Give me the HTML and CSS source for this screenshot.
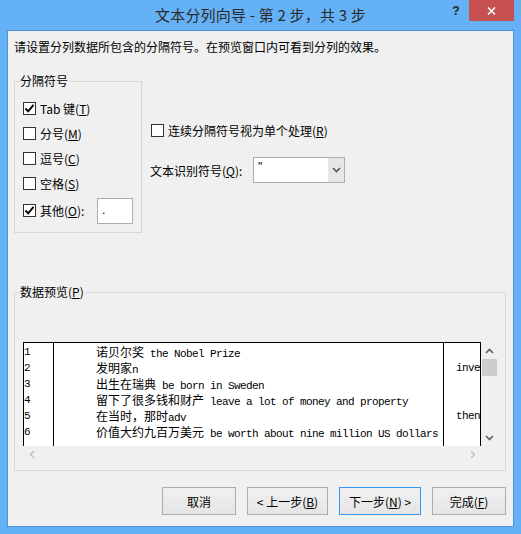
FILE: index.html
```html
<!DOCTYPE html>
<html lang="zh-CN">
<head>
<meta charset="utf-8">
<title>文本分列向导</title>
<link rel="stylesheet" href="styles.css">
</head>
<body>
<div class="window">
  <div class="titlebar">
    <div></div>
    <div class="title">文本分列向导 - 第 2 步，共 3 步</div>
    <div class="caption-btns">
      <span class="help">?</span>
      <span class="close"><svg width="9" height="8" viewBox="0 0 9 8"><path d="M1 0.5 L8 7.5 M8 0.5 L1 7.5" stroke="#fff" stroke-width="1.6" fill="none"/></svg></span>
    </div>
  </div>
  <div class="client">
    <p class="intro">请设置分列数据所包含的分隔符号。在预览窗口内可看到分列的效果。</p>
    <div class="options">
      <div class="group delims">
        <div class="group-title">分隔符号</div>
        <label class="check-row"><span class="cb"><svg width="11" height="11" viewBox="0 0 11 11"><path d="M1.5 5.5 L4.2 8.3 L9.5 1.8" stroke="#000" stroke-width="1.9" fill="none"/></svg></span><span>Tab 键(<u>T</u>)</span></label>
        <label class="check-row"><span class="cb"></span><span>分号(<u>M</u>)</span></label>
        <label class="check-row"><span class="cb"></span><span>逗号(<u>C</u>)</span></label>
        <label class="check-row"><span class="cb"></span><span>空格(<u>S</u>)</span></label>
        <label class="check-row other-row"><span class="cb"><svg width="11" height="11" viewBox="0 0 11 11"><path d="M1.5 5.5 L4.2 8.3 L9.5 1.8" stroke="#000" stroke-width="1.9" fill="none"/></svg></span><span class="other-label">其他(<u>O</u>):</span><span class="other-box">.</span></label>
      </div>
      <div class="right-opts">
        <label class="check-row single"><span class="cb"></span><span>连续分隔符号视为单个处理(<u>R</u>)</span></label>
        <div class="qualifier">
          <span class="q-label">文本识别符号(<u>Q</u>):</span>
          <div class="combo">
            <span class="combo-val">"</span>
            <span class="combo-btn"><svg width="9" height="6" viewBox="0 0 9 6"><path d="M1 1 L4.5 4.5 L8 1" stroke="#555" stroke-width="1.6" fill="none"/></svg></span>
          </div>
        </div>
      </div>
    </div>
    <div class="group preview">
      <div class="group-title">数据预览(<u>P</u>)</div>
      <div class="scroll-area">
        <div class="data">
          <div class="col c1">
            <div class="line">1</div>
            <div class="line">2</div>
            <div class="line">3</div>
            <div class="line">4</div>
            <div class="line">5</div>
            <div class="line">6</div>
          </div>
          <div class="col c2">
            <div class="line"><span class="zh">诺贝尔奖</span> the Nobel Prize</div>
            <div class="line"><span class="zh">发明家</span>n</div>
            <div class="line"><span class="zh">出生在瑞典</span> be born in Sweden</div>
            <div class="line"><span class="zh">留下了很多钱和财产</span> leave a lot of money and property</div>
            <div class="line"><span class="zh">在当时，那时</span>adv</div>
            <div class="line"><span class="zh">价值大约九百万美元</span> be worth about nine million US dollars</div>
          </div>
          <div class="col c3">
            <div class="line"></div>
            <div class="line">inve</div>
            <div class="line"></div>
            <div class="line"></div>
            <div class="line">then</div>
            <div class="line"></div>
          </div>
        </div>
        <div class="vscroll">
          <span class="sbtn"><svg width="9" height="6" viewBox="0 0 9 6"><path d="M1 5 L4.5 1.5 L8 5" stroke="#606060" stroke-width="1.6" fill="none"/></svg></span>
          <span class="thumb"></span>
          <span class="spacer"></span>
          <span class="sbtn"><svg width="9" height="6" viewBox="0 0 9 6"><path d="M1 1 L4.5 4.5 L8 1" stroke="#606060" stroke-width="1.6" fill="none"/></svg></span>
        </div>
        <div class="hscroll">
          <span class="sbtn"><svg width="6" height="9" viewBox="0 0 6 9"><path d="M5 1 L1.5 4.5 L5 8" stroke="#c2c2c2" stroke-width="1.6" fill="none"/></svg></span>
          <span class="sbtn"><svg width="6" height="9" viewBox="0 0 6 9"><path d="M1 1 L4.5 4.5 L1 8" stroke="#c2c2c2" stroke-width="1.6" fill="none"/></svg></span>
        </div>
        <div class="corner"></div>
      </div>
    </div>
    <div class="buttons">
      <button class="btn w74">取消</button>
      <button class="btn w81">&lt; 上一步(<u>B</u>)</button>
      <button class="btn w82 default">下一步(<u>N</u>) &gt;</button>
      <button class="btn w74">完成(<u>F</u>)</button>
    </div>
  </div>
</div>
</body>
</html>
```
FILE: styles.css
```css
* { box-sizing: border-box; }
html, body { margin: 0; padding: 0; }
body {
  width: 521px;
  height: 534px;
  overflow: hidden;
  font-family: "Noto Sans CJK SC", "Microsoft YaHei", sans-serif;
  font-size: 12px;
  color: #000;
}
u { text-decoration: underline; text-underline-offset: 1px; }

.window {
  width: 521px;
  height: 534px;
  background: #65b1f6;
  display: flex;
  flex-direction: column;
}

.titlebar {
  height: 30px;
  flex: none;
  display: grid;
  grid-template-columns: 1fr auto 1fr;
}
.title {
  font-size: 15px;
  line-height: 30px;
  color: #2a2a2a;
  white-space: pre;
  letter-spacing: 0.2px;
}
.caption-btns {
  display: flex;
  justify-content: flex-end;
  align-items: flex-start;
  padding-right: 7px;
}
.help {
  width: 26px;
  height: 22px;
  line-height: 22px;
  text-align: center;
  font-family: "Liberation Sans", Arial, sans-serif;
  font-weight: bold;
  font-size: 12px;
  color: #222;
}
.close {
  width: 45px;
  height: 21px;
  background: #c75050;
  display: flex;
  align-items: center;
  justify-content: center;
}

.client {
  flex: 1;
  margin: 0 7px 7px;
  border: 1px solid #4d94d9;
  background: #f0f0f0;
  padding: 0 7px 0 6px;
  display: flex;
  flex-direction: column;
}

.intro {
  margin: 8px 0 0;
  line-height: 16px;
  white-space: nowrap;
}

.options {
  display: flex;
  align-items: flex-start;
  margin-top: 26px;
}

.group {
  border: 1px solid #d7d7d7;
  padding-left: 8px;
}
.group-title {
  width: fit-content;
  margin: -9px 0 0 -4px;
  padding: 0 1px;
  background: #f0f0f0;
  line-height: 16px;
  white-space: nowrap;
}

.delims {
  width: 128px;
  height: 152px;
  flex: none;
}
.delims .group-title { margin-bottom: 7px; }

.check-row {
  display: flex;
  align-items: center;
  gap: 4px;
  height: 25px;
  white-space: nowrap;
}
.other-row { height: 29px; }
.cb {
  width: 13px;
  height: 13px;
  flex: none;
  border: 1px solid #333;
  background: #fff;
  display: flex;
  align-items: center;
  justify-content: center;
}
.other-label { width: 53px; }
.other-box {
  width: 36px;
  height: 26px;
  border: 1px solid #acacac;
  background: #fff;
  padding-left: 4px;
  line-height: 22px;
  font-family: "Liberation Sans", Arial, sans-serif;
}

.right-opts {
  margin-left: 8px;
  display: flex;
  flex-direction: column;
}
.single {
  margin-top: 39px;
  height: 20px;
  padding-left: 1px;
}
.qualifier {
  margin-top: 17px;
  height: 26px;
  display: flex;
  align-items: center;
}
.q-label { width: 103px; white-space: nowrap; }
.combo {
  width: 92px;
  height: 26px;
  border: 1px solid #acacac;
  display: flex;
}
.combo-val {
  flex: 1;
  background: #fff;
  padding-left: 4px;
  line-height: 18px;
  font-family: "Liberation Sans", Arial, sans-serif;
}
.combo-btn {
  width: 16px;
  background: #e6e6e6;
  display: flex;
  align-items: center;
  justify-content: center;
}

.preview {
  margin-top: 59px;
  width: 492px;
  padding-right: 7px;
  padding-bottom: 7px;
}
.preview .group-title { margin-bottom: 42px; }

.scroll-area {
  display: grid;
  grid-template-columns: 458px 17px;
  grid-template-rows: 104px 17px;
}
.data {
  background: #fff;
  border-left: 1px solid #000;
  border-top: 1px solid #000;
  display: flex;
  overflow: hidden;
  font-family: "Liberation Mono", "Courier New", monospace;
  font-size: 11px;
  letter-spacing: -0.6px;
  line-height: 16px;
}
.col {
  flex: none;
  border-right: 1px solid #000;
  padding-top: 1px;
  overflow: hidden;
}
.c1 { width: 30px; }
.c2 { width: 390px; padding-left: 42px; }
.c3 { width: 37px; padding-left: 12px; }
.line {
  height: 16px;
  white-space: pre;
  overflow: hidden;
}
.zh {
  font-family: "Noto Sans CJK SC", sans-serif;
  font-size: 12px;
  letter-spacing: 0;
  line-height: 16px;
}

.vscroll {
  display: flex;
  flex-direction: column;
}
.sbtn {
  width: 17px;
  height: 17px;
  flex: none;
  display: flex;
  align-items: center;
  justify-content: center;
}
.thumb {
  width: 15px;
  height: 17px;
  margin: 0 0 0 1px;
  background: #cdcdcd;
}
.spacer { flex: 1; }
.hscroll {
  display: flex;
  justify-content: space-between;
}

.buttons {
  margin-top: 16px;
  display: flex;
  justify-content: flex-end;
  gap: 11px;
}
.btn {
  height: 28px;
  padding: 0;
  border: 1px solid #acacac;
  background: linear-gradient(#f0f0f0, #e5e5e5);
  font-family: inherit;
  font-size: 12px;
  color: #000;
}
.btn.default { border-color: #3399ff; }
.w74 { width: 74px; }
.w81 { width: 81px; }
.w82 { width: 82px; }
```
